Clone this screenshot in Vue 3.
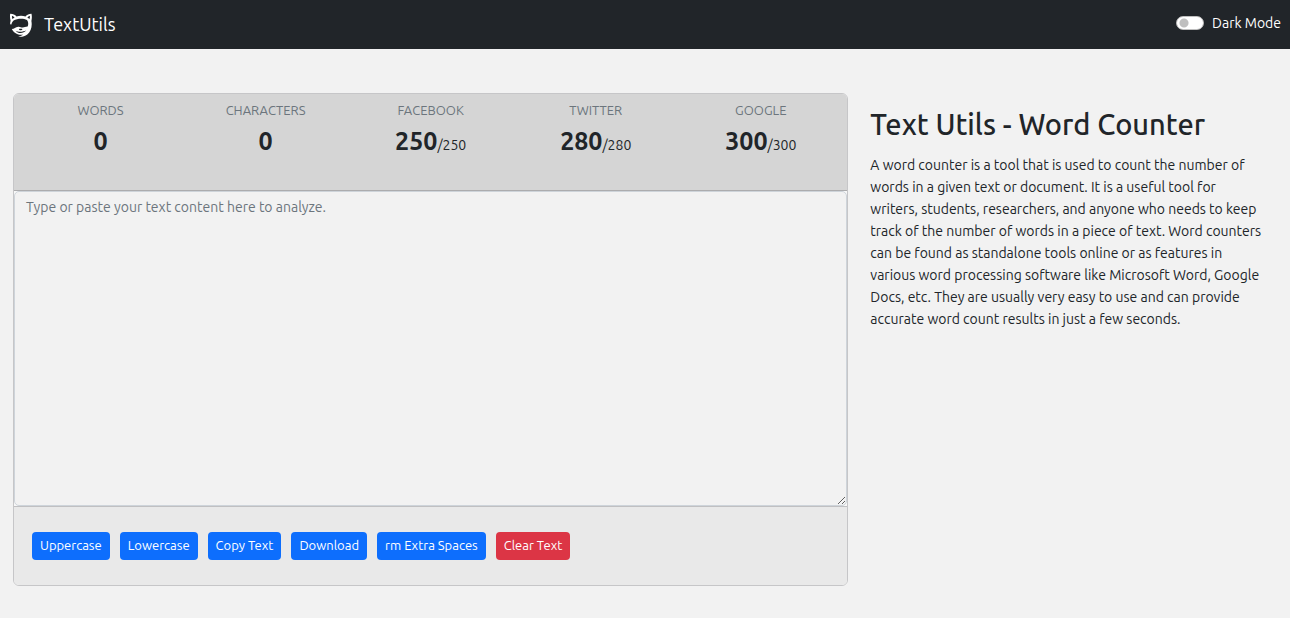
<script setup>
import { ref, computed } from 'vue'

const text = ref('')
const dark = ref(false)

const words = computed(() => text.value.split(/\s+/).filter(Boolean).length)
const stats = computed(() => [
  { name: 'WORDS', value: words.value },
  { name: 'CHARACTERS', value: text.value.length },
  { name: 'FACEBOOK', value: 250 - text.value.length, limit: 250 },
  { name: 'TWITTER', value: 280 - text.value.length, limit: 280 },
  { name: 'GOOGLE', value: 300 - text.value.length, limit: 300 },
])

function upper() { text.value = text.value.toUpperCase() }
function lower() { text.value = text.value.toLowerCase() }
function copy() { navigator.clipboard?.writeText(text.value) }
function download() {
  const link = document.createElement('a')
  link.href = URL.createObjectURL(new Blob([text.value], { type: 'text/plain' }))
  link.download = 'text.txt'
  link.click()
}
function trimSpaces() { text.value = text.value.replace(/[ ]+/g, ' ').trim() }
function clear() { text.value = '' }
</script>

<template>
  <div class="app" :class="{ dark }">
    <header class="navbar">
      <a class="brand" href="#">
        <svg class="logo" viewBox="0 0 24 24" aria-hidden="true">
          <path fill="#fff" fill-rule="evenodd" d="M1.2 .8C3.6 .7 6.1 1.8 7.5 3.4C10.3 2.6 13.7 2.6 16.5 3.4C17.9 1.8 20.4 .7 22.5 .8C23.1 3.3 22.9 6 22.4 8C23.4 13 22 18.5 18.3 21.4C15.7 23.4 12.2 24.2 9.2 23.6C11.3 23.2 13 22.6 14.2 21.6C10 22.4 4.8 20.6 2.8 16C5.5 16 6.2 14 9.3 13.8C11.3 13.7 12.1 14.6 13.8 14.6C15.4 14.6 16.4 13.6 18.6 13.6C19.6 11.6 19.4 8.4 17.9 7C14.6 5.3 8.2 5.4 4.6 7.6C3.2 8.8 2.7 10.3 2.4 11.6L1.1 11.2C1.1 9.8 1.3 8.6 1.6 7.7C.9 5.2.8 3 1.2.8ZM3 2.7C2.9 4 3.1 5.3 3.4 6L5.6 4.4C4.9 3.6 4 3 3 2.7ZM20.8 2.7C19.8 3 19 3.6 18.3 4.4L20.5 6C20.8 5.3 21 4 20.8 2.7ZM9.8 16.1C10.2 17.8 13 17.8 13.5 16.1C12.2 15.6 10.9 15.6 9.8 16.1ZM6.6 17.7C9 20.8 14.6 20.8 17.2 17.3C14.2 19.1 9.4 19.3 6.6 17.7Z" />
        </svg>
        <span>TextUtils</span>
      </a>
      <label class="mode">
        <input v-model="dark" type="checkbox" role="switch" />
        <span>Dark Mode</span>
      </label>
    </header>

    <main class="content">
      <section class="card">
        <dl class="stats">
          <div v-for="s in stats" :key="s.name" class="stat">
            <dt>{{ s.name }}</dt>
            <dd><strong>{{ s.value }}</strong><span v-if="s.limit">/{{ s.limit }}</span></dd>
          </div>
        </dl>
        <textarea v-model="text" aria-label="Text content" placeholder="Type or paste your text content here to analyze."></textarea>
        <div class="actions">
          <button type="button" @click="upper">Uppercase</button>
          <button type="button" @click="lower">Lowercase</button>
          <button type="button" @click="copy">Copy Text</button>
          <button type="button" @click="download">Download</button>
          <button type="button" @click="trimSpaces">rm Extra Spaces</button>
          <button type="button" class="danger" @click="clear">Clear Text</button>
        </div>
      </section>
      <aside class="about">
        <h1>Text Utils - Word Counter</h1>
        <p>A word counter is a tool that is used to count the number of words in a given text or document. It is a useful tool for writers, students, researchers, and anyone who needs to keep track of the number of words in a piece of text. Word counters can be found as standalone tools online or as features in various word processing software like Microsoft Word, Google Docs, etc. They are usually very easy to use and can provide accurate word count results in just a few seconds.</p>
      </aside>
    </main>
  </div>
</template>

<style>
body {
  margin: 0;
  background: #f2f2f2;
}
</style>

<style scoped>
.app {
  min-height: 100vh;
  background: #f2f2f2;
  color: #212529;
  font-family: Ubuntu, "Noto Sans", "Open Sans", sans-serif;
  font-size: 14px;
  line-height: 22px;
}
.app *,
.app {
  box-sizing: border-box;
}
.navbar {
  display: flex;
  justify-content: space-between;
  align-items: center;
  padding: 7px 9px;
  background: #212529;
  color: #fff;
}
.brand {
  display: flex;
  align-items: center;
  gap: 11px;
  color: #fff;
  font-size: 18px;
  line-height: 35px;
  text-decoration: none;
}
.logo {
  width: 24px;
  height: 24px;
}
.mode {
  display: flex;
  align-items: center;
  gap: 8px;
  padding-bottom: 4px;
}
.mode input {
  appearance: none;
  width: 28px;
  height: 14px;
  margin: 0;
  border: 1px solid #bfbfbf;
  border-radius: 7px;
  background: radial-gradient(circle at 7px 6px, #bfbfbf 4px, #fff 5px);
}
.mode input:checked {
  background: radial-gradient(circle at 19px 6px, #fff 4px, #0d6efd 5px);
}
.content {
  display: grid;
  grid-template-columns: repeat(12, minmax(0, 1fr));
  align-items: start;
  column-gap: 22px;
  padding: 44px 13px 32px;
}
.card {
  grid-column: span 8;
  display: flex;
  flex-direction: column;
  overflow: hidden;
  border: 1px solid #c6c6c8;
  border-radius: 6px;
  background: #f8f8f8;
}
.stats {
  display: flex;
  margin: 0;
  padding: 6px 4px 26px;
  border-bottom: 1px solid #acacae;
  background: #d5d5d5;
  text-align: center;
}
.stat {
  flex: 1;
}
dt {
  margin-bottom: 3px;
  color: #6c757d;
  font-size: 13px;
  line-height: 20px;
}
dd {
  margin: 0;
  line-height: 37px;
}
dd strong {
  font-size: 25px;
}
textarea {
  display: block;
  width: 100%;
  height: 315px;
  margin: 0;
  padding: 4px 11px;
  border: 1px solid #ced4da;
  border-radius: 5px;
  background: #f2f2f2;
  color: inherit;
  font: inherit;
  resize: vertical;
}
textarea::placeholder {
  color: #6c757d;
}
.actions {
  display: flex;
  flex-wrap: wrap;
  gap: 10px;
  padding: 25px 18px;
  border-top: 1px solid #c0c0c2;
  background: #e9e9e9;
}
button {
  padding: 3px 8px 5px;
  border: 0;
  border-radius: 4px;
  background: #0d6efd;
  color: #fff;
  font-family: inherit;
  font-size: 13px;
  line-height: 20px;
}
.danger {
  background: #dc3545;
}
.about {
  grid-column: span 4;
  padding-right: 14px;
}
h1 {
  margin: 14px 0 12px;
  font-size: 29px;
  font-weight: 500;
  line-height: 35px;
}
p {
  margin: 0;
}
.dark,
.dark textarea {
  background: #212529;
  color: #fff;
}
</style>
